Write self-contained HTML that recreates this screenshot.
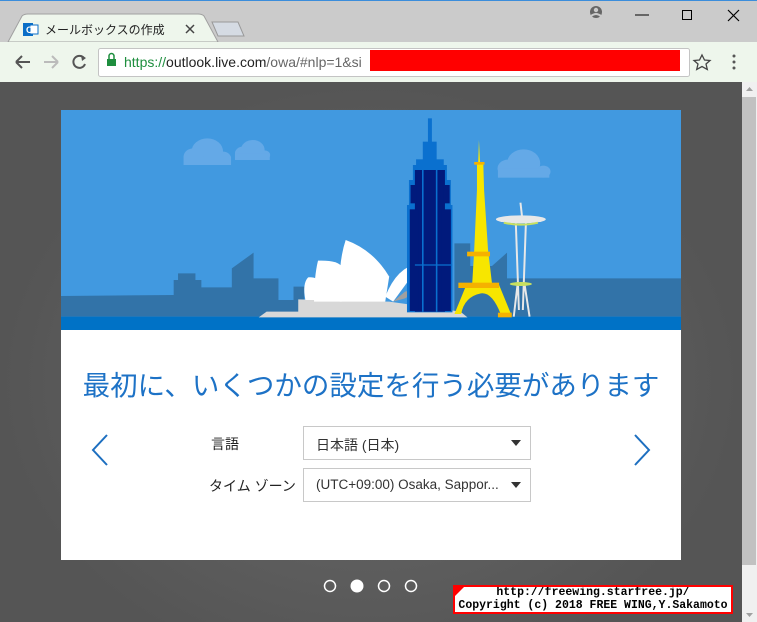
<!DOCTYPE html>
<html><head><meta charset="utf-8"><style>
*{margin:0;padding:0;box-sizing:border-box}
body{width:757px;height:622px;overflow:hidden;position:relative;background:#5b5b5b;font-family:"Liberation Sans","Noto Sans CJK JP",sans-serif}
.abs{position:absolute}
</style></head><body>
<div class="abs" style="left:0;top:0;width:757px;height:42px;background:#cbcbcb;border-top:1px solid #3b8ddb"></div>
<svg class="abs" style="left:0;top:0" width="757" height="82">
<path d="M8 42 L22 16 Q24 14 28 14 L198 14 Q202 14 204 16 L218 42 Z" fill="#eef6ec" stroke="#a0a0a0"/>
<path d="M212 22 L238 22 L244 36 L218 36 Z" fill="#d5dbe3" stroke="#999"/>
<rect x="23" y="23" width="10" height="13" fill="#0a6ec7"/><rect x="30" y="25" width="8" height="9" fill="#fff" stroke="#0a6ec7"/>
<text x="26" y="33" font-size="9" fill="#fff" font-weight="bold" font-family="Liberation Sans">O</text>
<text x="45" y="34" font-size="12" fill="#222" font-family="Liberation Sans,Noto Sans CJK JP,sans-serif">メールボックスの作成</text>
<path d="M186 25 L194 33 M194 25 L186 33" stroke="#444" stroke-width="1.5"/>
<circle cx="596" cy="12" r="6" fill="#666"/><circle cx="596" cy="10" r="2.2" fill="#cbcbcb"/><path d="M591 16 Q596 12 601 16" stroke="#cbcbcb" stroke-width="2" fill="none"/>
<path d="M635 15 H649" stroke="#000"/><rect x="682.5" y="10.5" width="9" height="9" fill="none" stroke="#000"/><path d="M728 10 L739 21 M739 10 L728 21" stroke="#000" stroke-width="1.2"/>
<rect x="0" y="42" width="757" height="40" fill="#eef6ec"/>
<path d="M16 62 H30 M16 62 L22 56 M16 62 L22 68" stroke="#555" stroke-width="2" fill="none"/>
<path d="M44 62 H58 M58 62 L52 56 M58 62 L52 68" stroke="#bbb" stroke-width="2" fill="none"/>
<path d="M84 58 A6 6 0 1 0 85 64" stroke="#555" stroke-width="2" fill="none"/><path d="M81 55 L86 58 L82 61" fill="#555"/>
<rect x="98.5" y="48.5" width="591" height="28" rx="2" fill="#fff" stroke="#c4c4c4"/>
<rect x="107" y="59" width="9" height="7" fill="#1e8e3e"/><path d="M109 59 V56 A2.5 2.5 0 0 1 114 56 V59" stroke="#1e8e3e" stroke-width="1.5" fill="none"/>
<text x="124" y="67" font-size="14" fill="#222"><tspan fill="#1e8e3e">https://</tspan>outlook.live.com<tspan fill="#666">/owa/#nlp=1&amp;si</tspan></text>
<rect x="370" y="50" width="310" height="21" fill="#f00"/>
<path d="M702 55 L704.5 60 L710 60.5 L706 64 L707.3 69.5 L702 66.5 L696.7 69.5 L698 64 L694 60.5 L699.5 60 Z" fill="none" stroke="#444" stroke-width="1.3"/>
<circle cx="734" cy="56" r="1.5" fill="#555"/><circle cx="734" cy="62" r="1.5" fill="#555"/><circle cx="734" cy="68" r="1.5" fill="#555"/>
</svg>
<div class="abs" style="left:0;top:82px;width:742px;height:540px;background:radial-gradient(ellipse at 370px 300px,#6a6a6a,#555 70%)"></div>
<div class="abs" style="left:742px;top:82px;width:15px;height:540px;background:#f0f0f0"></div>
<div class="abs" style="left:742px;top:97px;width:14px;height:468px;background:#c1c1c1"></div>
<svg class="abs" style="left:742px;top:82px" width="15" height="540"><path d="M4 9 L11 9 L7.5 5 Z" fill="#a0a0a0"/><path d="M4 531 L11 531 L7.5 535 Z" fill="#a0a0a0"/></svg>

<div class="abs" style="left:61px;top:110px;width:620px;height:450px;background:#fff"></div>
<svg class="abs" style="left:61px;top:110px" width="620" height="220" viewBox="0 0 1568 660" preserveAspectRatio="none">
<rect width="1568" height="660" fill="#4199e0"/>
<g fill="#64a9e7"><circle cx="370" cy="125" r="40"/><circle cx="335" cy="140" r="25"/><circle cx="410" cy="145" r="20"/><rect x="310" y="140" width="120" height="25"/>
<circle cx="485" cy="120" r="30"/><circle cx="460" cy="130" r="20"/><circle cx="515" cy="135" r="14"/><rect x="440" y="130" width="88" height="20"/>
<circle cx="1170" cy="160" r="42"/><circle cx="1130" cy="175" r="26"/><circle cx="1220" cy="185" r="18"/><rect x="1105" y="175" width="130" height="28"/></g>
<path fill="#3273a8" d="M0 558 L285 555 L285 510 L296 510 L296 490 L340 490 L340 510 L355 510 L355 532 L432 532 L432 475 L487 428 L487 505 L550 505 L550 570 L588 570 L588 530 L615 530 L615 620 L995 620 L995 400 L1035 400 L1035 468 L1090 468 L1128 428 L1128 505 L1568 505 L1568 620 L0 620 Z"/>
<rect y="620" width="1568" height="40" fill="#0072c6"/>
<path fill="#d8d8d8" d="M500 622 L520 605 L600 605 L600 568 L830 575 L1010 605 L1028 622 Z"/>
<g fill="#fff"><path d="M705 575 Q700 460 720 390 Q790 420 830 500 L820 575 Z"/><path d="M640 575 Q640 500 650 452 Q700 450 710 470 L710 575 Z"/><path d="M820 560 Q850 470 905 460 L880 510 L840 575 Z"/><path d="M618 570 Q610 520 625 502 Q650 500 655 520 L650 570 Z"/></g>
<path fill="#a0a0a0" d="M905 462 L880 520 L918 532 L870 545 L840 575 L870 565 L918 532 Z"/>
<g fill="#0a70cf"><rect x="928" y="25" width="10" height="80"/><rect x="915" y="95" width="35" height="60"/><rect x="898" y="148" width="70" height="20"/><rect x="890" y="165" width="86" height="50"/><rect x="880" y="210" width="106" height="82"/><rect x="875" y="285" width="115" height="322"/></g>
<g fill="#011a7c"><rect x="895" y="180" width="76" height="425"/><rect x="884" y="225" width="15" height="55"/><rect x="968" y="225" width="15" height="55"/><rect x="882" y="298" width="22" height="305"/><rect x="962" y="298" width="24" height="305"/></g>
<path d="M915 180 V605 M950 180 V605 M895 465 H990" stroke="#0a70cf" stroke-width="4"/>
<path fill="#f7e600" d="M1057 90 L1060 160 L1068 160 L1070 240 L1080 420 L1090 520 L1108 525 L1138 612 L1112 612 Q1090 545 1062 550 Q1020 560 1012 612 L995 612 L1025 525 L1040 520 L1045 420 L1052 240 L1052 160 L1055 160 Z"/>
<g fill="#f5b100"><rect x="1045" y="156" width="26" height="8"/><rect x="1027" y="425" width="58" height="14"/><rect x="1005" y="518" width="103" height="16"/><rect x="1105" y="608" width="35" height="14"/></g>
<path d="M1150 330 L1158 600 M1176 330 L1168 600 M1155 520 L1145 620 M1172 520 L1185 620" stroke="#e8e8e8" stroke-width="5" fill="none"/>
<path d="M1162 278 L1166 320" stroke="#e8e8e8" stroke-width="5"/>
<ellipse cx="1163" cy="328" rx="63" ry="12" fill="#e8e8e8"/><path d="M1120 338 Q1163 350 1206 338" stroke="#c8e060" stroke-width="6" fill="none"/>
<ellipse cx="1163" cy="522" rx="28" ry="6" fill="#c8e060"/>
</svg>
<div class="abs" style="left:41px;top:363px;width:660px;text-align:center;font-size:27.5px;line-height:40px;color:#1d72c6;font-family:'Noto Sans CJK JP',sans-serif;white-space:nowrap">最初に、いくつかの設定を行う必要があります</div>
<svg class="abs" style="left:90px;top:433px" width="20" height="34"><path d="M17 2 L3 17 L17 32" stroke="#1d6fc0" stroke-width="2" fill="none"/></svg>
<svg class="abs" style="left:632px;top:433px" width="20" height="34"><path d="M3 2 L17 17 L3 32" stroke="#1d6fc0" stroke-width="2" fill="none"/></svg>
<div class="abs" style="left:211px;top:434px;font-size:14px;color:#222">言語</div>
<div class="abs" style="left:209px;top:476px;font-size:14px;color:#222">タイム ゾーン</div>
<div class="abs" style="left:303px;top:426px;width:228px;height:34px;border:1px solid #c8c8c8;font-size:14px;color:#333;padding:8px 0 0 12px">日本語 (日本)</div>
<div class="abs" style="left:303px;top:468px;width:228px;height:34px;border:1px solid #c8c8c8;font-size:13.5px;color:#333;padding:8px 0 0 12px;white-space:nowrap">(UTC+09:00) Osaka, Sappor...</div>
<svg class="abs" style="left:510px;top:438px" width="12" height="60"><path d="M1 2 H11 L6 8 Z M1 44 H11 L6 50 Z" fill="#333"/></svg>
<svg class="abs" style="left:320px;top:578px" width="100" height="16"><g stroke="#fff" stroke-width="1.5" fill="none"><circle cx="10" cy="8" r="5.5"/><circle cx="64" cy="8" r="5.5"/><circle cx="91" cy="8" r="5.5"/></g><circle cx="37" cy="8" r="6.5" fill="#fff"/></svg>
<div class="abs" style="left:453px;top:585px;width:280px;height:29px;background:#fff;border:2px solid #f00;font-family:'Liberation Mono',monospace;font-size:11.5px;font-weight:bold;line-height:12.5px;text-align:center;color:#000;white-space:nowrap;overflow:hidden">http://freewing.starfree.jp/<br>Copyright (c) 2018 FREE WING,Y.Sakamoto</div>
<svg class="abs" style="left:455px;top:587px" width="10" height="10"><path d="M0 0 H9 L0 9 Z" fill="#f00"/></svg>
</body></html>
